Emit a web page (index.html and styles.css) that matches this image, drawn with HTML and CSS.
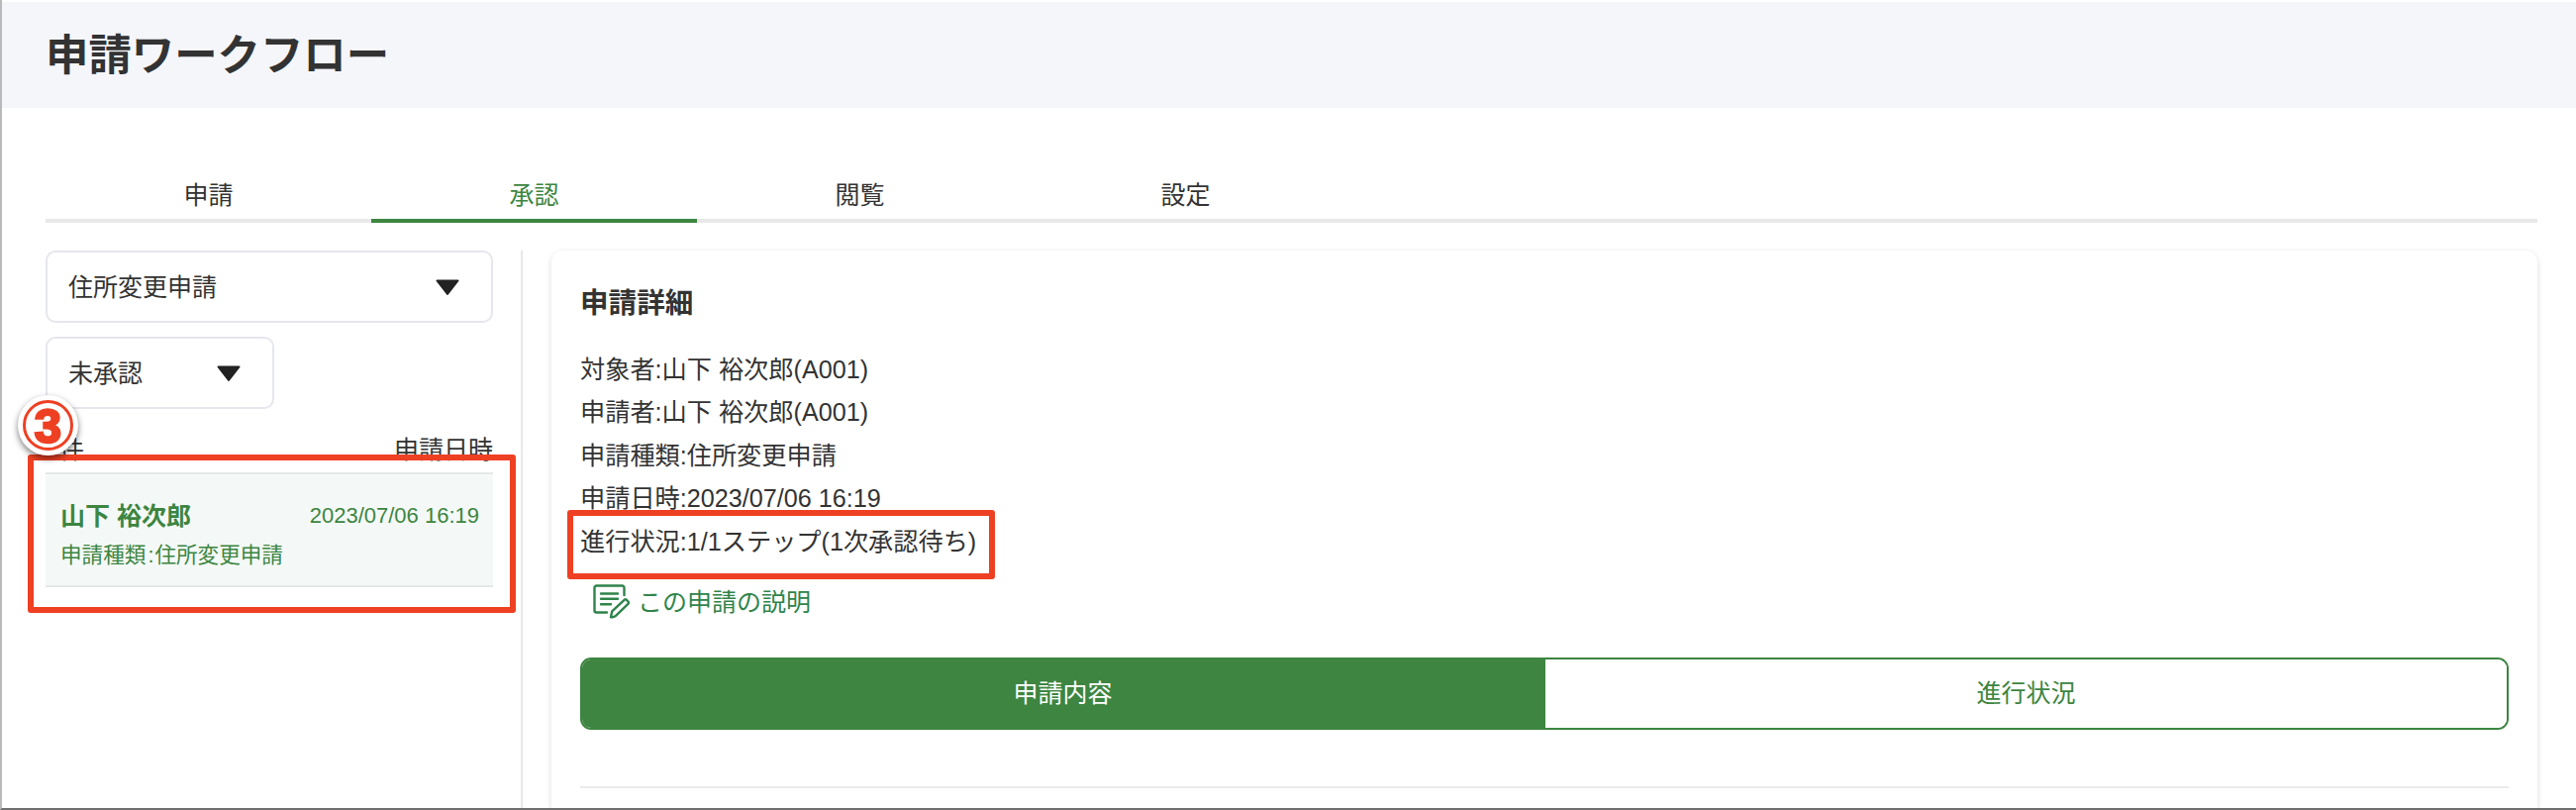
FILE: index.html
```
<!DOCTYPE html>
<html lang="ja">
  <head>
    <meta charset="UTF-8" />
    <meta name="viewport" content="width=device-width, initial-scale=1.0" />
    <title>申請ワークフロー</title>
    <link rel="stylesheet" href="styles.css">
  </head>
  <body>
    <header class="page-header">
      <h1>申請ワークフロー</h1>
    </header>

    <nav class="tabs">
      <a class="tab">申請</a>
      <a class="tab active">承認</a>
      <a class="tab">閲覧</a>
      <a class="tab">設定</a>
    </nav>

    <main class="content">
      <aside class="sidebar">
        <div class="select">
          <span>住所変更申請</span>
          <svg class="caret" viewBox="0 0 26 17">
            <path d="M2.500 1.500h21L13 15z"></path>
          </svg>
        </div>
        <div class="select select-small">
          <span>未承認</span>
          <svg class="caret" viewBox="0 0 26 17">
            <path d="M2.500 1.500h21L13 15z"></path>
          </svg>
        </div>

        <div class="list-head">
          <span class="count">件</span>
          <span>申請日時</span>
          <span class="step-badge"><span class="step-number">3</span></span>
        </div>

        <div class="request">
          <div class="request-top">
            <span class="request-name">山下 裕次郎</span>
            <span class="request-date">2023/07/06 16:19</span>
          </div>
          <div class="request-type">申請種類<span class="colon">:</span>住所変更申請</div>
          <div class="marker marker-request"></div>
        </div>
      </aside>

      <section class="detail">
        <h2>申請詳細</h2>
        <ul class="info">
          <li>対象者:山下 裕次郎(A001)</li>
          <li>申請者:山下 裕次郎(A001)</li>
          <li>申請種類:住所変更申請</li>
          <li>申請日時:2023/07/06 16:19</li>
          <li class="info-status">進行状況:1/1ステップ(1次承認待ち)<div class="marker marker-status"></div></li>
        </ul>

        <a class="description">
          <svg viewBox="0 0 38 35">
            <path d="M31.5 11V3.5a2 2 0 0 0-2-2h-26a2 2 0 0 0-2 2v23a2 2 0 0 0 2 2H14"></path>
            <path d="M8 9.500h17M8 14.800h17M8 20.200h10"></path>
            <path d="M18 33.200l1.200-5.800L31.600 15.800q1.200-1 2.300.1l1.600 1.600q1 1.200-.1 2.300L23 31.800q-1.800 1.800-5 1.400z"></path>
          </svg>
          <span>この申請の説明</span>
        </a>

        <div class="switch">
          <button class="switch-item selected">申請内容</button>
          <button class="switch-item">進行状況</button>
        </div>
        <hr>
      </section>
    </main>
  </body>
</html>
```

FILE: styles.css
```
* {
  margin: 0;
  padding: 0;
  box-sizing: border-box;
}

body {
  height: 818px;
  display: flex;
  flex-direction: column;
  overflow: hidden;
  padding-top: 2px;
  background: #fff;
  color: #333;
  border-left: 2px solid #b9b9b9;
  border-bottom: 2px solid #6f6f6f;
  font-family: "Liberation Sans", "Noto Sans CJK JP", sans-serif;
  font-size: 25px;
  line-height: 36px;
}

.page-header {
  height: 107px;
  flex-shrink: 0;
  display: flex;
  align-items: center;
  padding-left: 44px;
  background: #f5f6fa;
}

h1 {
  font-size: 43.4px;
  line-height: 60px;
}

.tabs {
  display: flex;
  flex-shrink: 0;
  height: 53px;
  margin: 63px 39px 0 44px;
  border-bottom: 4px solid #e8e8e8;
}

.tab {
  width: 329px;
  height: 53px;
  padding-top: 7px;
  text-align: center;
}

.tab.active {
  color: #3d8540;
  border-bottom: 4px solid #3d8540;
}

.content {
  flex: 1;
  min-height: 0;
  display: flex;
  padding: 28px 39px 0 44px;
}

.sidebar {
  width: 482px;
  flex-shrink: 0;
  padding-right: 28px;
  border-right: 2px solid #e8e8ea;
}

.select {
  display: flex;
  align-items: center;
  justify-content: space-between;
  height: 73px;
  margin-bottom: 14px;
  padding: 0 31px 0 21px;
  border: 2px solid #e6e6ee;
  border-radius: 10px;
}

.select-small {
  width: 231px;
}

.caret {
  width: 26px;
  height: 17px;
  margin-top: 2px;
  fill: #222;
  stroke: #222;
  stroke-width: 2;
  stroke-linejoin: round;
}

.list-head {
  position: relative;
  display: flex;
  justify-content: space-between;
  margin-top: 23px;
}

.count {
  padding-left: 14px;
}

.step-badge {
  position: absolute;
  left: -28px;
  top: -37px;
  z-index: 2;
  width: 61px;
  height: 61px;
  padding: 5px;
  border-radius: 50%;
  background: #fff;
  box-shadow: 0 3px 6px rgba(0, 0, 0, 0.5);
}

.step-number {
  display: block;
  height: 51px;
  border: 3px solid #ee4023;
  border-radius: 50%;
  color: #ee4023;
  font-size: 49px;
  font-weight: bold;
  line-height: 46px;
  text-align: center;
  -webkit-text-stroke: 2.5px #ee4023;
}

.request {
  position: relative;
  height: 116px;
  margin-top: 5px;
  padding: 24px 14px 0 15px;
  background: #f4f9f7;
  border-top: 2px solid #e5e8e6;
  border-bottom: 2px solid #e5e8e6;
  color: #3d8540;
}

.request-top {
  display: flex;
  justify-content: space-between;
}

.request-name {
  font-weight: bold;
}

.request-date {
  font-size: 22px;
}

.request-type {
  margin-top: 4px;
  font-size: 21.6px;
}

.colon {
  padding: 0 1px 0 2px;
}

/* red frames laid over the screen */
.marker {
  position: absolute;
  border: 6px solid #ee4023;
  border-radius: 3px;
}

.marker-request {
  left: -18px;
  top: -20px;
  width: 493px;
  height: 160px;
}

.marker-status {
  left: -13px;
  top: -14px;
  width: 432px;
  height: 70px;
}

.detail {
  flex: 1;
  margin-left: 29px;
  padding: 32px 29px 0;
  border-radius: 12px 12px 0 0;
  box-shadow: 0 2px 6px rgba(0, 0, 0, 0.14);
}

h2 {
  font-size: 28.600px;
  line-height: 42px;
}

.info {
  list-style: none;
  margin-top: 28px;
  font-size: 25.2px;
}

.info li {
  height: 43.400px;
}

.info-status {
  position: relative;
}

.description {
  display: flex;
  align-items: center;
  gap: 7px;
  margin-top: 18px;
  padding-left: 13px;
  color: #2f844b;
}

.description svg {
  width: 38px;
  height: 35px;
  fill: none;
  stroke: #2f844b;
  stroke-width: 2.4;
  stroke-linecap: round;
  stroke-linejoin: round;
}

.switch {
  display: flex;
  height: 73px;
  margin-top: 38px;
  border: 2px solid #3d8540;
  border-radius: 11px;
  overflow: hidden;
}

.switch-item {
  flex: 1;
  border: none;
  background: #fff;
  color: #3d8540;
  font: inherit;
}

.switch-item.selected {
  background: #3d8540;
  color: #fff;
  border-right: 2px solid #3d8540;
}

hr {
  margin-top: 57px;
  border: none;
  border-top: 2px solid #ebebeb;
}
```
